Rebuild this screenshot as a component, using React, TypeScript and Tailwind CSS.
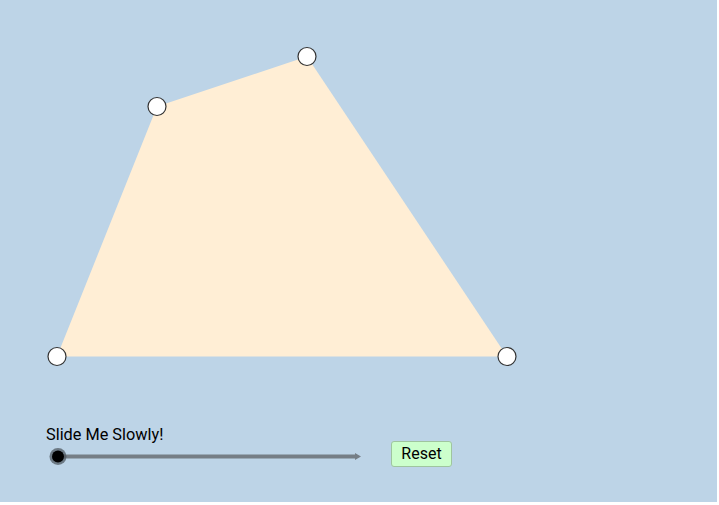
import React from "react";

export default function App() {
  const pts: [number, number][] = [
    [57, 356.5],
    [157, 106.5],
    [307, 56.5],
    [507, 356.5],
  ];
  return (
    <div className="w-[719px] h-[505px] bg-white">
      <div
        className="relative w-[717px] h-[502px] bg-[#bdd4e7] overflow-hidden"
        style={{ fontFamily: "Roboto, 'Liberation Sans', sans-serif" }}
      >
        <svg className="absolute left-0 top-0" width="717" height="502" viewBox="0 0 717 502">
          <polygon points={pts.map((p) => p.join(",")).join(" ")} fill="#ffeed5" stroke="none" />
          {pts.map(([x, y], i) => (
            <circle key={i} cx={x} cy={y} r="9" fill="#ffffff" stroke="#333333" strokeWidth="1.2" />
          ))}
          {/* slider */}
          <line x1="57" y1="456.5" x2="357" y2="456.5" stroke="#757e86" strokeWidth="4" />
          <polygon points="355,453 361,456.5 355,460" fill="#757e86" />
          <circle cx="58" cy="456.5" r="8.5" fill="#4a525a" opacity="0.7" />
          <circle cx="58" cy="456.5" r="6" fill="#000000" />
        </svg>
        <div className="absolute left-[46px] top-[425px] text-[16.3px] leading-[20px] text-black">
          Slide Me Slowly!
        </div>
        <div className="absolute left-[391px] top-[441px] w-[61px] h-[26px] rounded-[3px] border border-[#9fc59f] bg-[#ccffcc] flex items-center justify-center text-[16px] text-black">
          Reset
        </div>
      </div>
    </div>
  );
}
